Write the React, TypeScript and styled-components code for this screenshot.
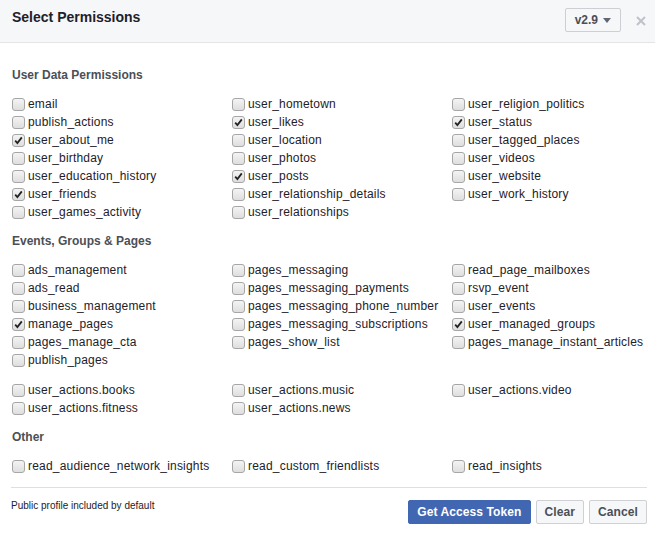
import React from 'react'
import styled, {createGlobalStyle} from 'styled-components'

const GlobalStyle = createGlobalStyle`
  body {
    margin: 0;
    background: #fff;
    font-family: "Liberation Sans", Arial, Helvetica, sans-serif;
  }
`

const Dialog = styled.div`
  width: 655px;
  height: 535px;
  background: #fff;
  display: flex;
  flex-direction: column;
`

const Header = styled.div`
  height: 42px;
  background: #f6f7f9;
  border-bottom: 1px solid #e5e5e5;
  display: flex;
  align-items: center;
  padding: 0 9px 0 12px;
`

const Title = styled.h1`
  flex: 1;
  margin: 0;
  margin-top: -8px;
  font-size: 14px;
  font-weight: bold;
  color: #1d2129;
`

const VersionSelect = styled.div`
  display: flex;
  align-items: center;
  gap: 5px;
  height: 22px;
  padding: 0 9px;
  border: 1px solid #ccd0d5;
  border-radius: 2px;
  background: #f6f7f9;
  font-size: 12px;
  font-weight: bold;
  color: #4b4f56;
  margin-top: -2px;
`

const Caret = styled.span`
  width: 0;
  height: 0;
  border-left: 4px solid transparent;
  border-right: 4px solid transparent;
  border-top: 5px solid #606770;
`

const Close = styled.span`
  margin-left: 15px;
  width: 10px;
  display: flex;
`

const Body = styled.div`
  padding: 12px 8px 0 12px;
  display: flex;
  flex-direction: column;
`

const Section = styled.div`
  margin-top: 13px;
  display: flex;
  flex-direction: column;
  gap: 11px;
`

const Heading = styled.h2`
  margin: 0;
  padding-bottom: 2px;
  font-size: 12px;
  line-height: 14px;
  font-weight: bold;
  color: #4b4f56;
`

const Groups = styled.div`
  display: flex;
  flex-direction: column;
  gap: 12px;
`

const Grid = styled.div`
  display: grid;
  grid-template-columns: 220px 220px 1fr;
  grid-auto-rows: 18px;
`

const Item = styled.label`
  display: flex;
  align-items: center;
  gap: 3px;
  font-size: 12px;
  letter-spacing: 0.2px;
  color: #1d2129;
  white-space: nowrap;
`

const Box = styled.span`
  width: 11px;
  height: 11px;
  border: 1px solid #a6a6a6;
  border-radius: 3px;
  background: linear-gradient(#f4f4f4, #dedede);
  display: flex;
  align-items: center;
  justify-content: center;
  flex-shrink: 0;
`

const Footer = styled.div`
  margin: 12px 8px 0 11px;
  border-top: 1px solid #dddfe2;
  padding-top: 12px;
  display: flex;
  align-items: flex-start;
  justify-content: space-between;
`

const Note = styled.span`
  font-size: 10px;
  color: #1d2129;
`

const Buttons = styled.div`
  display: flex;
  gap: 5px;
`

const Button = styled.button<{$primary?: boolean}>`
  height: 24px;
  padding: 0 8px;
  font-family: inherit;
  font-size: 12px;
  font-weight: bold;
  letter-spacing: 0.1px;
  border-radius: 2px;
  border: 1px solid ${(p) => (p.$primary ? '#4267b2' : '#ced0d4')};
  background: ${(p) => (p.$primary ? '#4267b2' : '#f6f7f9')};
  color: ${(p) => (p.$primary ? '#fff' : '#4b4f56')};
`

type Perm = [string, boolean]

const userData: Perm[] = [
  ['email', false], ['user_hometown', false], ['user_religion_politics', false],
  ['publish_actions', false], ['user_likes', true], ['user_status', true],
  ['user_about_me', true], ['user_location', false], ['user_tagged_places', false],
  ['user_birthday', false], ['user_photos', false], ['user_videos', false],
  ['user_education_history', false], ['user_posts', true], ['user_website', false],
  ['user_friends', true], ['user_relationship_details', false], ['user_work_history', false],
  ['user_games_activity', false], ['user_relationships', false],
]

const events: Perm[] = [
  ['ads_management', false], ['pages_messaging', false], ['read_page_mailboxes', false],
  ['ads_read', false], ['pages_messaging_payments', false], ['rsvp_event', false],
  ['business_management', false], ['pages_messaging_phone_number', false], ['user_events', false],
  ['manage_pages', true], ['pages_messaging_subscriptions', false], ['user_managed_groups', true],
  ['pages_manage_cta', false], ['pages_show_list', false], ['pages_manage_instant_articles', false],
  ['publish_pages', false],
]

const actions: Perm[] = [
  ['user_actions.books', false], ['user_actions.music', false], ['user_actions.video', false],
  ['user_actions.fitness', false], ['user_actions.news', false],
]

const other: Perm[] = [
  ['read_audience_network_insights', false], ['read_custom_friendlists', false], ['read_insights', false],
]

const Check = ({checked}: {checked: boolean}) => (
  <Box>
    {checked && (
      <svg width="9" height="9" viewBox="0 0 9 9">
        <path d="M1.2 4.6 L3.4 7 L7.8 1.4" stroke="#222" strokeWidth="1.8" fill="none" />
      </svg>
    )}
  </Box>
)

const PermGrid = ({items}: {items: Perm[]}) => (
  <Grid>
    {items.map(([name, checked]) => (
      <Item key={name}>
        <Check checked={checked} />
        {name}
      </Item>
    ))}
  </Grid>
)

const App = () => {
  return (
    <Dialog>
      <GlobalStyle />
      <Header>
        <Title>Select Permissions</Title>
        <VersionSelect>
          v2.9 <Caret />
        </VersionSelect>
        <Close>
          <svg width="10" height="10" viewBox="0 0 10 10">
            <path d="M1 1 L9 9 M9 1 L1 9" stroke="#bec2c9" strokeWidth="2" />
          </svg>
        </Close>
      </Header>
      <Body>
        <Section>
          <Heading>User Data Permissions</Heading>
          <PermGrid items={userData} />
        </Section>
        <Section>
          <Heading>Events, Groups &amp; Pages</Heading>
          <Groups>
            <PermGrid items={events} />
            <PermGrid items={actions} />
          </Groups>
        </Section>
        <Section>
          <Heading>Other</Heading>
          <PermGrid items={other} />
        </Section>
      </Body>
      <Footer>
        <Note>Public profile included by default</Note>
        <Buttons>
          <Button $primary>Get Access Token</Button>
          <Button>Clear</Button>
          <Button>Cancel</Button>
        </Buttons>
      </Footer>
    </Dialog>
  )
}

export default App
